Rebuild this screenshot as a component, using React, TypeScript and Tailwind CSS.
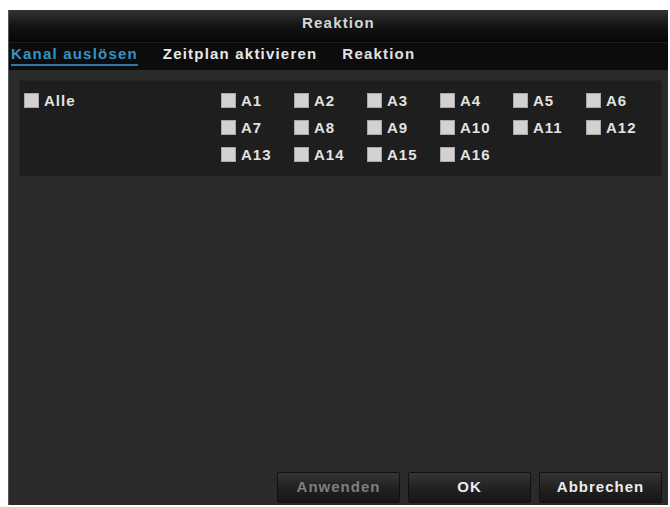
import React from "react";

const font = { fontFamily: '"Liberation Sans", Arial, sans-serif' };

function Box() {
  return (
    <span className="inline-block w-[15px] h-[15px] shrink-0 bg-[#d2d2d2] border border-[#a8a8a8]" />
  );
}

function Check({ label }: { label: string }) {
  return (
    <div className="flex items-center gap-[5px] h-[15px]">
      <Box />
      <span className="text-[15px] leading-none font-bold tracking-[1px] text-[#e2e2e2]">{label}</span>
    </div>
  );
}

export default function App() {
  const channels = Array.from({ length: 16 }, (_, i) => `A${i + 1}`);
  return (
    <div className="w-[670px] h-[507px] bg-white pt-[10px] pl-[8px]" style={font}>
      <div className="w-[660px] h-[495px] flex flex-col bg-[#2a2a2a] border-l border-[#555]">
        <div className="h-[32px] shrink-0 flex items-center justify-center bg-gradient-to-b from-[#333333] via-[#141414] to-[#070707]">
          <span className="text-[15px] font-bold tracking-[1.2px] text-[#d6d6d6] -mt-[6px]">Reaktion</span>
        </div>
        <div className="h-[28px] shrink-0 flex items-start gap-[25px] pl-[2px] bg-[#0c0c0c] border-t border-[#1c1c1c]">
          <div className="flex flex-col pt-[2px]">
            <span className="text-[15px] font-bold tracking-[1.2px] text-[#3494c4] leading-[18px]">Kanal auslösen</span>
            <span className="h-[2px] mt-[1px] bg-[#2a7aa8]" />
          </div>
          <span className="pt-[2px] text-[15px] font-bold tracking-[1.2px] text-[#e8e8e8] leading-[18px]">Zeitplan aktivieren</span>
          <span className="pt-[2px] text-[15px] font-bold tracking-[1.2px] text-[#e0e0e0] leading-[18px]">Reaktion</span>
        </div>
        <div className="flex-1 flex flex-col pt-[10px] pl-[10px] pr-[6px] pb-[2px]">
          <div className="h-[97px] bg-[#1e1e1e] border border-[#262626] flex items-start pt-[12px] pl-[4px]">
            <div className="w-[197px]">
              <Check label="Alle" />
            </div>
            <div className="grid grid-cols-[repeat(6,73px)] content-start gap-y-[12px]">
              {channels.map((c) => (
                <Check key={c} label={c} />
              ))}
            </div>
          </div>
          <div className="flex-1" />
          <div className="flex justify-end gap-[8px]">
            {[
              { t: "Anwenden", c: "text-[#7e7e7e]" },
              { t: "OK", c: "text-[#ececec]" },
              { t: "Abbrechen", c: "text-[#ececec]" },
            ].map((b) => (
              <div
                key={b.t}
                className={`w-[123px] h-[31px] flex items-center justify-center bg-gradient-to-b from-[#353535] via-[#222222] to-[#161616] border border-[#111] rounded-[2px] text-[15px] font-bold tracking-[1px] ${b.c}`}
              >
                {b.t}
              </div>
            ))}
          </div>
        </div>
      </div>
    </div>
  );
}
